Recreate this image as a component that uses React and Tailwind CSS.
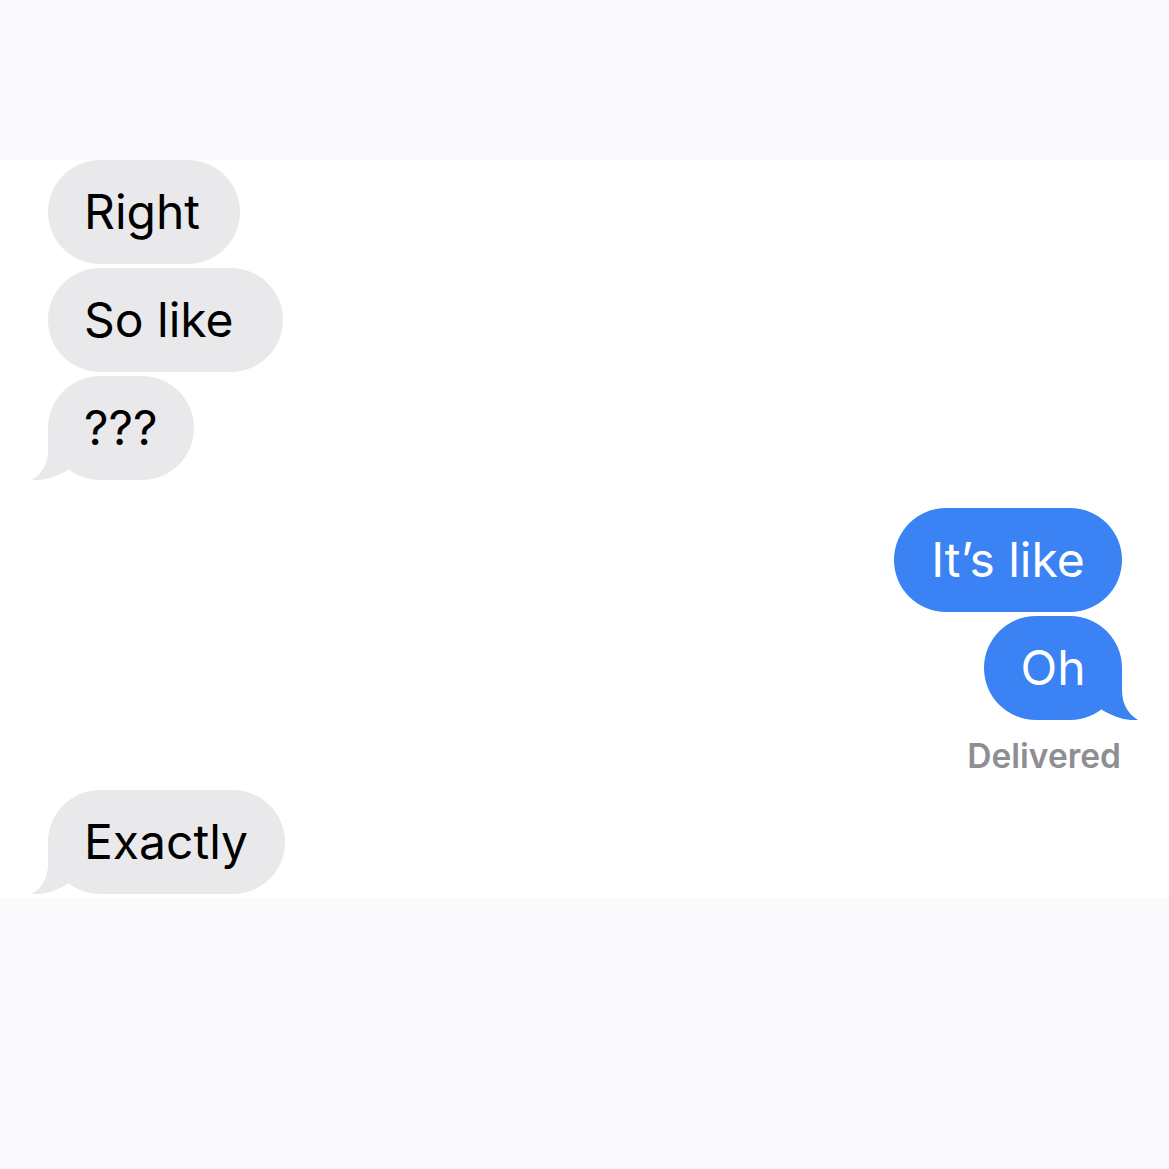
import React from "react";

function TailLeft({ color }) {
  return (
    <svg className="absolute" style={{ left: -16, bottom: 0 }} width="40" height="52" viewBox="0 0 40 52">
      <path d="M16 0 L16 22 C16 36 10 46 0 52 C12 53 24 49 36 42 L36 0 Z" fill={color} />
    </svg>
  );
}

function TailRight({ color }) {
  return (
    <svg className="absolute" style={{ right: -16, bottom: 0 }} width="40" height="52" viewBox="0 0 40 52">
      <path d="M24 0 L24 22 C24 36 30 46 40 52 C28 53 16 49 4 42 L4 0 Z" fill={color} />
    </svg>
  );
}

function Gray({ text, w, tail }) {
  return (
    <div className="relative h-[104px] rounded-[52px] bg-[#e9e9eb] flex items-center pl-[36px] text-black" style={{ width: w }}>
      {tail && <TailLeft color="#e9e9eb" />}
      <span className="relative">{text}</span>
    </div>
  );
}

function Blue({ text, w, tail }) {
  return (
    <div className="relative h-[104px] rounded-[52px] bg-[#3b82f4] flex items-center justify-center text-white" style={{ width: w }}>
      {tail && <TailRight color="#3b82f4" />}
      <span className="relative">{text}</span>
    </div>
  );
}

export default function App() {
  return (
    <div className="w-[1169px] h-[1169px] bg-white flex flex-col text-[48px] leading-none" style={{ fontFamily: "Inter, 'Liberation Sans', sans-serif" }}>
      <div className="h-[160px] bg-[#fafafc] shrink-0" />
      <div className="h-[738px] shrink-0 flex flex-col pl-[48px] pr-[47px]">
        <div className="flex flex-col gap-[4px]">
          <Gray text="Right" w={192} />
          <Gray text="So like" w={235} />
          <Gray text="???" w={146} tail />
        </div>
        <div className="flex flex-col items-end gap-[4px] mt-[28px]">
          <Blue text="It’s like" w={228} />
          <Blue text="Oh" w={138} tail />
        </div>
        <div className="flex justify-end mt-[18px] pr-[1px]">
          <span className="text-[33.5px] font-semibold text-[#8e8e93] leading-[36px]">Delivered</span>
        </div>
        <div className="mt-[16px]">
          <Gray text="Exactly" w={237} tail />
        </div>
      </div>
      <div className="flex-1 bg-[#fafafc]" />
    </div>
  );
}
